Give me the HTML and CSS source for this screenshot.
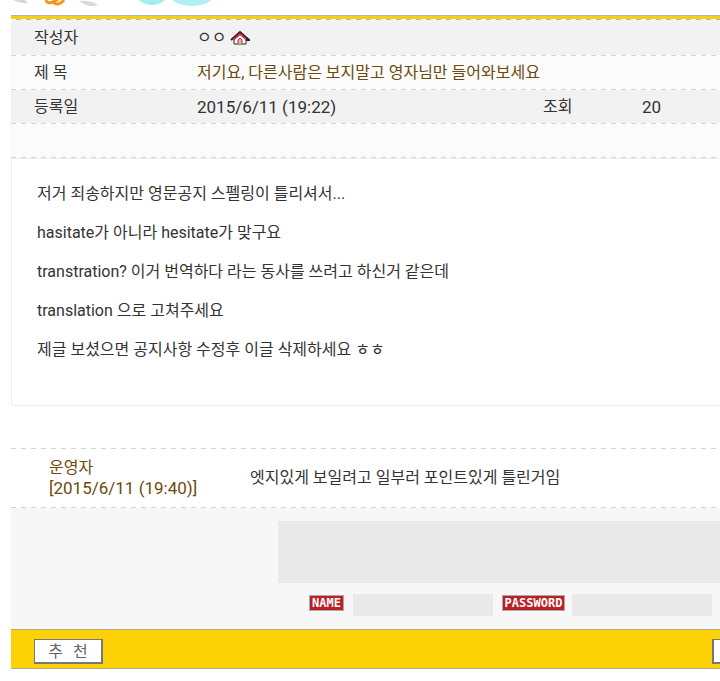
FILE: index.html
```
<!DOCTYPE html>
<html lang="ko">
<head>
    <meta charset="UTF-8">
    <meta name="viewport" content="width=device-width, initial-scale=1.0">
    <title>게시판</title>
    <link rel="stylesheet" href="styles.css">
</head>
<body>

    <!-- 상단 그림 -->
    <svg class="header-art" width="240" height="15" viewBox="0 0 240 15" aria-hidden="true">
        <path d="M13 0 Q20 4 28 3 Q26 0 21 -1 Z" fill="#d6d6d6"/>
        <path d="M79 1 Q90 0 98 5 Q90 8 84 4 Z" fill="#d9d9d9"/>
        <path d="M46 0 Q47 4 53 2 Q58 7 64 0 M53 2 L60 -2" fill="none" stroke="#f7941d" stroke-width="3"/>
        <ellipse cx="152" cy="-5" rx="15" ry="10" fill="#a6edee"/>
        <ellipse cx="192" cy="-7" rx="23" ry="13" fill="#b1f0f0"/>
    </svg>

    <main class="board">
        <table class="info">
            <colgroup>
                <col class="col-label">
                <col>
                <col class="col-label2">
                <col class="col-count">
            </colgroup>
            <tr class="gray first">
                <th>작성자</th>
                <td colspan="3">ㅇㅇ
                    <svg class="home" width="20" height="15" viewBox="0 0 20 15" role="img" aria-label="홈">
                        <path d="M4 8 V14 H16 V8 L10 3 Z" fill="#fff" stroke="#222" stroke-width="1"/>
                        <path d="M1 10 L10 2 L19 10 H16" fill="none" stroke="#222" stroke-width="2"/>
                        <path d="M3 10 L10 4 L16 9" fill="none" stroke="#d8323a" stroke-width="2"/>
                        <path d="M8 14 V10 L10 8 L12 10 V14" fill="#e8b0a8" stroke="#a33" stroke-width="1"/>
                    </svg>
                </td>
            </tr>
            <tr>
                <th>제 목</th>
                <td colspan="3" class="subject">저기요, 다른사람은 보지말고 영자님만 들어와보세요</td>
            </tr>
            <tr class="gray">
                <th>등록일</th>
                <td class="num">2015/6/11 (19:22)</td>
                <th class="plain">조회</th>
                <td class="num">20</td>
            </tr>
            <tr>
                <td colspan="4"></td>
            </tr>
        </table>

        <article class="content">
            <p>저거 죄송하지만 영문공지 스펠링이 틀리셔서...</p>
            <p>hasitate가 아니라 hesitate가 맞구요</p>
            <p>transtration? 이거 번역하다 라는 동사를 쓰려고 하신거 같은데</p>
            <p>translation 으로 고쳐주세요</p>
            <p>제글 보셨으면 공지사항 수정후 이글 삭제하세요 ㅎㅎ</p>
        </article>

        <!-- 댓글 -->
        <section class="comment">
            <div class="writer">운영자<br><span class="num">[2015/6/11 (19:40)]</span></div>
            <p>엣지있게 보일려고 일부러 포인트있게 틀린거임</p>
        </section>

        <form class="reply">
            <textarea aria-label="댓글"></textarea>
            <div class="fields">
                <label for="name">NAME</label>
                <input type="text" id="name">
                <label for="password">PASSWORD</label>
                <input type="password" id="password">
            </div>
        </form>

        <div class="bar">
            <button type="button" class="btn"><span>추</span><span>천</span></button>
            <button type="button" class="btn btn-right" aria-label="목록"></button>
        </div>
    </main>

</body>
</html>
```

FILE: styles.css
```
* {
    margin: 0;
    padding: 0;
    box-sizing: border-box;
}
body {
    background: #fff;
    color: #333;
    font-family: Roboto, "Noto Sans CJK KR", sans-serif;
    font-size: 16px;
    line-height: 20px;
    overflow-x: hidden;
}

.header-art {
    display: block;
}
.board {
    margin-left: 11px;
    border-top: 1px solid #b5b3b8;
}

/* 글 정보 */
.info {
    width: 100%;
    table-layout: fixed;
    border-collapse: separate;
    border-spacing: 0;
    border-top: 3px solid #f9d010;
}
.col-label { width: 186px; }
.col-label2 { width: 99px; }
.col-count { width: 78px; }

.info tr {
    height: 34px;
    background: repeating-linear-gradient(90deg, #d4d4d4 0 5px, #fff 5px 10px) bottom / 100% 1px no-repeat #fbfbfb;
}
.info tr.gray { background-color: #f2f2f2; }
.info tr.first {
    height: 37px;
    background:
        repeating-linear-gradient(90deg, #fff 0 5px, #b0b0cc 5px 10px) top / 100% 1px no-repeat,
        repeating-linear-gradient(90deg, #d4d4d4 0 5px, #fff 5px 10px) bottom / 100% 1px no-repeat #f2f2f2;
}
.info th {
    padding-left: 23px;
    font-weight: normal;
    text-align: left;
}
.info th.plain { padding-left: 0; }
.info .subject { color: #6b4a0c; }
.num { font-size: 17px; }
.home { vertical-align: -2px; }

/* 본문 */
.content {
    height: 248px;
    padding: 25px;
    border: 1px solid #eee;
    border-right: 0;
}
.content p {
    margin-bottom: 19px;
}

/* 댓글 */
.comment {
    display: flex;
    align-items: center;
    height: 60px;
    margin-top: 42px;
    padding-left: 38px;
    background:
        repeating-linear-gradient(90deg, #d4d4d4 0 5px, #fff 5px 10px) top / 100% 1px no-repeat,
        repeating-linear-gradient(90deg, #d4d4d4 0 5px, #fff 5px 10px) bottom / 100% 1px no-repeat;
}
.writer {
    width: 201px;
    color: #6b4a0c;
}

/* 댓글 쓰기 */
.reply {
    padding: 13px 0 13px 267px;
    background: #f7f7f7;
}
.reply textarea,
.reply input {
    display: block;
    border: 0;
    background: #e9e9e9;
    font: inherit;
}
.reply textarea {
    width: 100%;
    height: 62px;
    resize: none;
}
.fields {
    display: flex;
    padding: 11px 8px 0 31px;
}
.fields label {
    height: 16px;
    margin-top: 1px;
    padding: 0 2px;
    border: 1px solid #aaa;
    background: #bd2024;
    color: #fff;
    font: bold 12px/14px "DejaVu Sans Mono", monospace;
}
.fields input {
    flex: 1;
    min-width: 0;
    height: 22px;
    margin: 0 9px;
}
.fields input:last-child {
    margin: 0 0 0 7px;
}

/* 하단 버튼 */
.bar {
    display: flex;
    justify-content: space-between;
    padding: 9px 0 4px 23px;
    border-top: 1px solid #b5ad80;
    border-bottom: 1px solid #b5ad80;
    background: #fcd207;
    overflow: hidden;
}
.btn {
    display: flex;
    justify-content: center;
    gap: 10px;
    width: 69px;
    height: 25px;
    border: 1px solid #777;
    border-right-width: 2px;
    border-bottom-width: 2px;
    background: #fff;
    color: #666;
    font: 16px/20px "Noto Sans CJK KR", sans-serif;
}
.btn-right {
    margin-right: -61px;
    border-left-width: 2px;
}
```
